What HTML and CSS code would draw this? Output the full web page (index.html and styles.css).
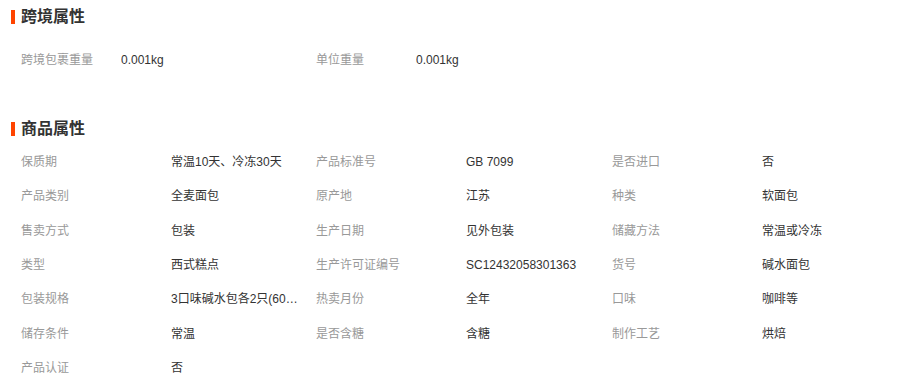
FILE: index.html
```html
<!DOCTYPE html>
<html lang="zh-CN">
<head>
<meta charset="utf-8">
<title>商品属性</title>
<link rel="stylesheet" href="styles.css">
</head>
<body>
<section class="block block-cross">
  <h2 class="block-title"><span class="bar"></span>跨境属性</h2>
  <div class="cross-grid">
    <span class="label">跨境包裹重量</span><span class="value">0.001kg</span>
    <span class="label">单位重量</span><span class="value">0.001kg</span>
  </div>
</section>
<section class="block block-goods">
  <h2 class="block-title"><span class="bar"></span>商品属性</h2>
  <div class="attr-grid">
    <span class="label">保质期</span><span class="value">常温10天、冷冻30天</span>
    <span class="label">产品标准号</span><span class="value">GB 7099</span>
    <span class="label">是否进口</span><span class="value">否</span>

    <span class="label">产品类别</span><span class="value">全麦面包</span>
    <span class="label">原产地</span><span class="value">江苏</span>
    <span class="label">种类</span><span class="value">软面包</span>

    <span class="label">售卖方式</span><span class="value">包装</span>
    <span class="label">生产日期</span><span class="value">见外包装</span>
    <span class="label">储藏方法</span><span class="value">常温或冷冻</span>

    <span class="label">类型</span><span class="value">西式糕点</span>
    <span class="label">生产许可证编号</span><span class="value">SC12432058301363</span>
    <span class="label">货号</span><span class="value">碱水面包</span>

    <span class="label">包装规格</span><span class="value"><span class="clip">3口味碱水包各2只(60g×6只)</span></span>
    <span class="label">热卖月份</span><span class="value">全年</span>
    <span class="label">口味</span><span class="value">咖啡等</span>

    <span class="label">储存条件</span><span class="value">常温</span>
    <span class="label">是否含糖</span><span class="value">含糖</span>
    <span class="label">制作工艺</span><span class="value">烘焙</span>

    <span class="label">产品认证</span><span class="value">否</span>
  </div>
</section>
</body>
</html>
```
FILE: styles.css
```css
html, body {
  margin: 0;
  padding: 0;
  background: #fff;
}
body {
  font-family: "Liberation Sans", "Noto Sans CJK SC", sans-serif;
  font-size: 12px;
  color: #333;
}
.block-title {
  display: flex;
  align-items: center;
  gap: 6px;
  margin: 0;
  padding-left: 11px;
  height: 20px;
  font-size: 16px;
  font-weight: bold;
  color: #333;
  line-height: 20px;
}
.bar {
  width: 4px;
  height: 14px;
  background: #ff4400;
}
.block-cross {
  padding-top: 7px;
}
.cross-grid {
  display: grid;
  grid-template-columns: 100px 195px 100px auto;
  margin-top: 23px;
  padding-left: 21px;
  line-height: 20px;
}
.block-goods {
  padding-top: 49px;
}
.attr-grid {
  display: grid;
  grid-template-columns: 150px 145px 150px 146px 150px auto;
  grid-auto-rows: 34.33px;
  align-items: center;
  margin-top: 6px;
  padding-left: 21px;
  line-height: 20px;
}
.label {
  color: #999;
  white-space: nowrap;
}
.value {
  color: #333;
  white-space: nowrap;
  overflow: hidden;
  text-overflow: ellipsis;
  max-width: 127px;
}
.clip {
  display: block;
  overflow: hidden;
  text-overflow: ellipsis;
  white-space: nowrap;
}
.cross-grid .value {
  max-width: none;
}
```
